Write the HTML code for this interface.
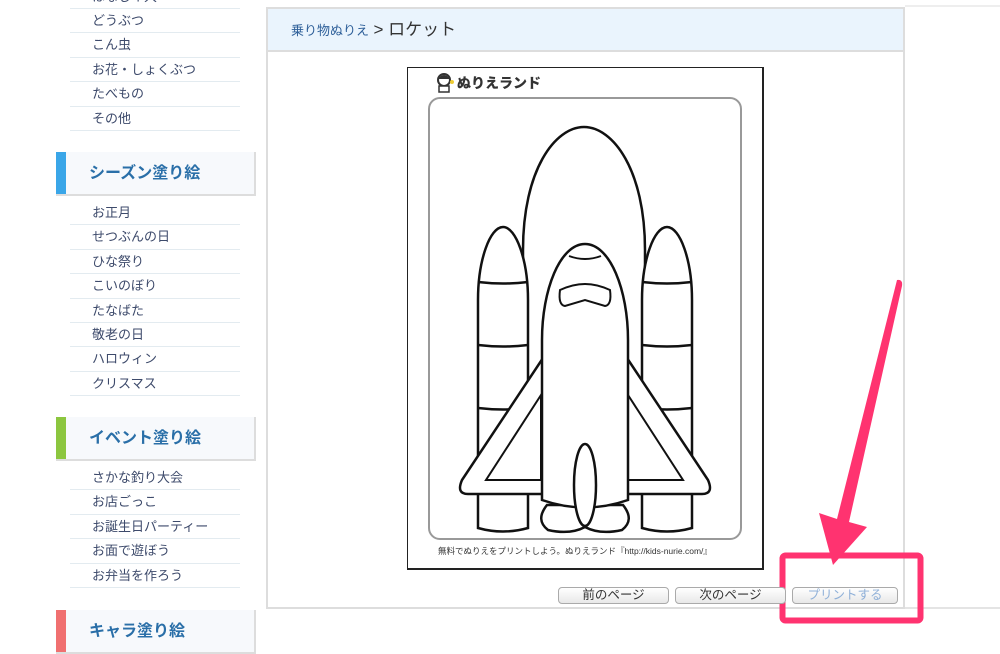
<!DOCTYPE html>
<html><head><meta charset="utf-8">
<style>
*{margin:0;padding:0;box-sizing:border-box}
html,body{width:1000px;height:628px}
body{position:relative;overflow:hidden;background:#fff;font-family:"Liberation Sans","Noto Sans CJK JP",sans-serif}
.a{position:absolute}
.it{position:absolute;left:70px;width:170px;height:24.4px;border-bottom:1px solid #e3ebf0;font-size:13px;color:#3d4a6b;padding-left:22px;line-height:23px}
.hd{position:absolute;left:56px;width:200px;height:44px;background:#f7f9fc;border-right:2px solid #ddd;border-bottom:2px solid #ddd;font-size:16px;font-weight:bold;color:#2a6fa8;padding-left:33px;line-height:43px}
.hd i{position:absolute;left:0;top:0;width:10px;height:42px}
.btn{position:absolute;top:587px;height:17px;border:1px solid #aaa;border-radius:4px;background:linear-gradient(#fff,#e8e8e8);font-size:12.5px;color:#333;text-align:center;line-height:15px}
</style></head><body>
<div class="it" style="top:-15.4px">はなしイ大</div>
<div class="it" style="top:9px">どうぶつ</div>
<div class="it" style="top:33.4px">こん虫</div>
<div class="it" style="top:57.8px">お花・しょくぶつ</div>
<div class="it" style="top:82.2px">たべもの</div>
<div class="it" style="top:106.6px">その他</div>
<div class="hd" style="top:152px"><i style="background:#3aa6e8"></i>シーズン塗り絵</div>
<div class="it" style="top:201px">お正月</div>
<div class="it" style="top:225.4px">せつぶんの日</div>
<div class="it" style="top:249.8px">ひな祭り</div>
<div class="it" style="top:274.2px">こいのぼり</div>
<div class="it" style="top:298.6px">たなばた</div>
<div class="it" style="top:323px">敬老の日</div>
<div class="it" style="top:347.4px">ハロウィン</div>
<div class="it" style="top:371.8px">クリスマス</div>
<div class="hd" style="top:417px"><i style="background:#8cc63f"></i>イベント塗り絵</div>
<div class="it" style="top:466px">さかな釣り大会</div>
<div class="it" style="top:490.4px">お店ごっこ</div>
<div class="it" style="top:514.8px">お誕生日パーティー</div>
<div class="it" style="top:539.2px">お面で遊ぼう</div>
<div class="it" style="top:563.6px">お弁当を作ろう</div>
<div class="hd" style="top:610px"><i style="background:#f07070"></i>キャラ塗り絵</div>

<div class="a" style="left:266px;top:7px;width:639px;height:602px;border:2px solid #ddd"></div>
<div class="a" style="left:905px;top:607px;width:95px;height:2px;background:#e4e4e4"></div>
<div class="a" style="left:905px;top:5px;width:95px;height:2px;background:#eee"></div>
<div class="a" style="left:268px;top:9px;width:635px;height:43px;background:#eaf4fd;border-bottom:2px solid #ddd;padding-left:23px;line-height:42px;color:#333"><span style="font-size:13px;color:#2e5f99">乗り物ぬりえ</span> <span style="font-size:17px">&gt; ロケット</span></div>

<div class="a" style="left:407px;top:67px;width:357px;height:503px;border:1.5px solid #222;border-right-width:2px;border-bottom-width:2px;background:#fff"></div>
<div class="a" style="left:428px;top:97px;width:314px;height:443px;border:2px solid #999;border-radius:12px"></div>
<div class="a" style="left:434px;top:72px;width:20px;height:22px"><svg width="20" height="22"><circle cx="10" cy="8" r="6" fill="#fff" stroke="#333" stroke-width="2"/><path d="M4 7 Q10 -1 16 7" fill="#333"/><rect x="5" y="14" width="10" height="6" fill="#fff" stroke="#333" stroke-width="1.5"/><circle cx="18" cy="10" r="2" fill="#ec3"/></svg></div>
<div class="a" style="left:457px;top:73px;font-size:14px;font-weight:900;color:#333">ぬりえランド</div>
<div class="a" style="left:438px;top:545px;font-size:8.5px;color:#333;white-space:nowrap">無料でぬりえをプリントしよう。ぬりえランド『http://kids-nurie.com/』</div>

<svg class="a" style="left:0;top:0" width="1000" height="628">
<g fill="#fff" stroke="#111" stroke-width="2.5">
<path d="M523 490 L523 250 C523 170 555 127 584 127 C613 127 645 170 645 250 L645 490 Z"/>
<path d="M478 528 L478 300 C478 260 490 227 503 227 C516 227 528 260 528 300 L528 528 Q503 535 478 528 Z"/>
<path d="M478 282 Q503 285 528 282 M478 345 Q503 348 528 345 M478 408 Q503 411 528 408" fill="none"/>
<path d="M642 528 L642 300 C642 260 654 227 667 227 C680 227 692 260 692 300 L692 528 Q667 535 642 528 Z"/>
<path d="M642 282 Q667 285 692 282 M642 345 Q667 348 692 345 M642 408 Q667 411 692 408" fill="none"/>
<path d="M545 355 L462 480 Q456 494 468 494 L702 494 Q714 494 708 480 L625 355 Z"/>
<path d="M541 395 L486 480 L541 480 Z M628 395 L683 480 L628 480 Z" fill="none" stroke-width="2"/>
<path d="M547 505 Q535 520 548 530 Q570 535 585 527 Q600 535 622 530 Q635 520 623 505 Z"/>
<path d="M542 500 L542 340 C542 290 560 244 585 244 C610 244 628 290 628 340 L628 500 Q585 515 542 500 Z"/>
<path d="M569 256 Q585 262 601 256" fill="none" stroke-width="2"/>
<path d="M560 290 Q558 305 565 306 L585 300 L605 306 Q612 305 610 290 Q597 284 585 284 Q573 284 560 290 Z" stroke-width="2"/>
<ellipse cx="585" cy="485" rx="11" ry="41"/>
</g>
<path d="M897 280 Q903 279 902 286 L849 522 L867 527 L833 565 L819 513 L837 519 Z" fill="#ff3370"/>
<rect x="782.5" y="555.5" width="138" height="65" rx="3" fill="none" stroke="#ff3370" stroke-width="6"/>
</svg>

<div class="btn" style="left:558px;width:111px">前のページ</div>
<div class="btn" style="left:675px;width:111px">次のページ</div>
<div class="btn" style="left:792px;width:106px;color:#8fb0d8">プリントする</div>
</body></html>
